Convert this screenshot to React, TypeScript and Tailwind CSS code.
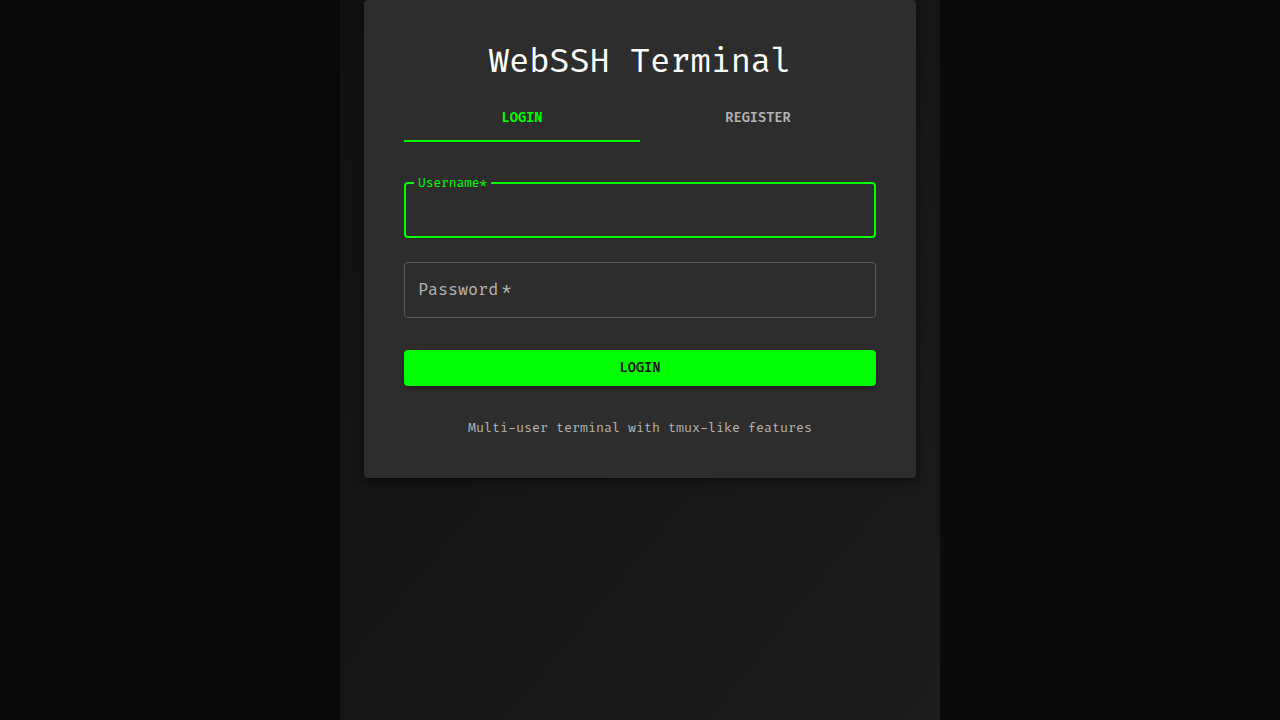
import { useState } from "react";

const mono = "font-['Fira_Code','DejaVu_Sans_Mono',monospace]";

function Tab({ label, active, onClick }: { label: string; active: boolean; onClick: () => void }) {
  return (
    <button
      onClick={onClick}
      className={`relative flex-1 h-12 pt-[2px] flex items-center justify-center text-[13.3px] font-semibold uppercase cursor-pointer ${
        active ? "text-[#00ff00]" : "text-[#b3b3b3]"
      }`}
    >
      {label}
      {active && <span className="absolute left-0 right-0 bottom-0 h-[2px] bg-[#00ff00]" />}
    </button>
  );
}

export default function App() {
  const [tab, setTab] = useState<"login" | "register">("login");

  return (
    <div className={`min-h-screen w-full bg-[#0a0a0a] flex justify-center ${mono}`}>
      <div className="w-[600px] min-h-screen bg-linear-to-br from-[#111111] to-[#1c1c1c] flex justify-center">
        <div className="w-[552px] self-start bg-[#2d2d2d] rounded shadow-[0_3px_8px_rgba(0,0,0,0.5)] px-10 pt-10 pb-[39px]">
          <h1 className="text-center text-[33px] tracking-[-0.15px] leading-[44px] text-white">WebSSH Terminal</h1>

          {/* Tabs */}
          <div className="flex mt-[10px]">
            <Tab label="Login" active={tab === "login"} onClick={() => setTab("login")} />
            <Tab label="Register" active={tab === "register"} onClick={() => setTab("register")} />
          </div>

          {/* Username */}
          <div className="relative mt-10 h-14 rounded border-2 border-[#00ff00]">
            <span className="absolute left-[8px] -top-[9px] px-1 bg-[#2d2d2d] text-[12.5px] leading-4 text-[#00ff00]">
              Username*
            </span>
            <input className="w-full h-full bg-transparent outline-none px-[13px] text-white text-[16px]" />
          </div>

          {/* Password */}
          <div className="relative mt-6 h-14 rounded border border-[#5a5a5a] flex items-center px-[13px] pt-px">
            <span className="text-[16.3px] text-[#b3b3b3]">Password{"\u2009"}*</span>
          </div>

          <button className="mt-8 w-full h-9 pt-px rounded bg-[#00ff00] text-[13.3px] font-semibold text-[#111111] uppercase shadow-[0_2px_4px_rgba(0,0,0,0.4)]">
            Login
          </button>

          <p className="mt-[33px] text-center text-[13px] text-[#b3b3b3]">
            Multi-user terminal with tmux-like features
          </p>
        </div>
      </div>
    </div>
  );
}
